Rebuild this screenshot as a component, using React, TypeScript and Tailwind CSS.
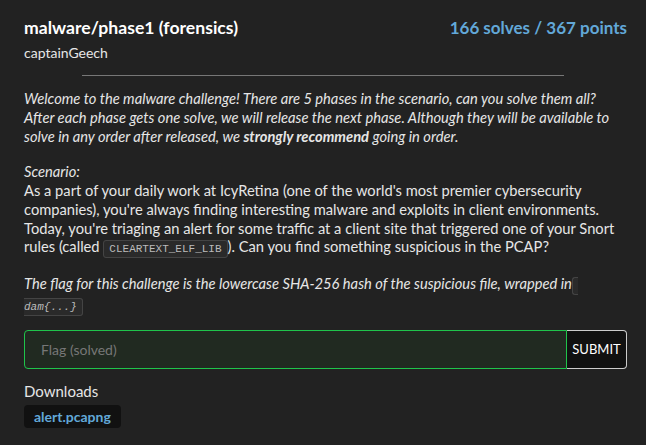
import React from "react";

const codeCls =
  "rounded-[3px] border border-[#444] bg-[#2a2a2a] px-[5px] py-[2px] font-['Liberation_Mono',monospace] text-[11px] leading-none text-[#bbb] [box-decoration-break:slice]";

export default function App() {
  return (
    <div className="min-h-[445px] bg-[#222222] px-[24px] pt-[17px] font-['Lato',sans-serif] text-[#e6e6e6]">
      <div className="flex w-[603px] items-baseline justify-between">
        <h1 className="text-[17.6px] font-bold leading-[22px] text-white">
          malware/phase1 (forensics)
        </h1>
        <span className="text-[17px] font-bold leading-[22px] text-[#62a8d8]">
          166 solves / 367 points
        </span>
      </div>
      <div className="mt-[4px] text-[14px] leading-[20px]">captainGeech</div>
      <hr className="mx-auto mt-[12px] w-[482px] border-t border-[#777]" />

      <div className="mt-[13px] w-[603px] text-[14.7px] leading-[18.75px]">
        <p className="italic">
          Welcome to the malware challenge! There are 5 phases in the scenario,
          can you solve them all? After each phase gets one solve, we will
          release the next phase. Although they will be available to solve in
          any order after released, we <strong>strongly recommend</strong>{" "}
          going in order.
        </p>
        <p className="mt-[17px]">
          <em>Scenario:</em>
          <br />
          As a part of your daily work at IcyRetina (one of the world's most
          premier cybersecurity companies), you're always finding interesting
          malware and exploits in client environments. Today, you're triaging an
          alert for some traffic at a client site that triggered one of your
          Snort rules (called <code className={codeCls}>CLEARTEXT_ELF_LIB</code>
          ). Can you find something suspicious in the PCAP?
        </p>
        <p className="mt-[17px] italic leading-[21px]">
          The flag for this challenge is the lowercase SHA-256 hash of the
          suspicious file, wrapped in
          <code className={codeCls}>{"\u200Bdam{...}"}</code>
        </p>
      </div>

      <form className="mt-[15px] flex h-[39px] w-[603px]">
        <input
          type="text"
          placeholder="Flag (solved)"
          disabled
          className="h-full flex-1 rounded-l-[4px] border border-[#1fc44b] bg-[#212a21] px-[16px] text-[14px] text-white placeholder:text-[#777] outline-none"
        />
        <button
          type="submit"
          className="h-full w-[60px] rounded-r-[4px] border border-l-0 border-[#cccccc] bg-[#111] text-[13px] text-white"
        >
          SUBMIT
        </button>
      </form>

      <div className="mt-[12px] text-[15px] leading-[20px]">Downloads</div>
      <a
        href="#"
        className="mt-[4px] inline-flex h-[23px] items-center rounded-[4px] bg-[#111] px-[10px] text-[14px] font-bold text-[#62a8d8]"
      >
        alert.pcapng
      </a>
    </div>
  );
}
